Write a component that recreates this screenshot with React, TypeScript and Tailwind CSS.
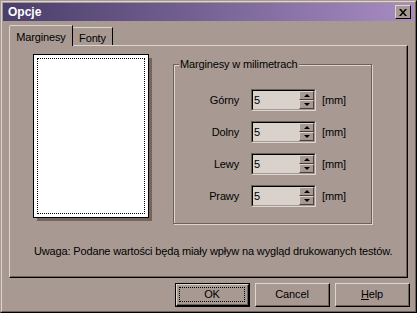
import React from 'react';

const font = { fontFamily: '"Liberation Sans", Arial, sans-serif' };

function Spin({ label }: { label: string }) {
  return (
    <div className="flex items-center h-[22px]">
      <span className="w-[68px] text-right pr-[12px]">{label}</span>
      <div className="w-[65px] h-[22px] border-t border-l border-[#6e605a] border-b border-r border-b-[#ddd5d0] border-r-[#ddd5d0] flex">
        <div className="flex-1 border-t border-l border-black border-b border-r border-b-[#a89a93] border-r-[#a89a93] bg-[#d9d1cc] flex">
          <span className="flex-1 pl-[1px] leading-[18px]">5</span>
          <div className="w-[15px] flex flex-col">
            <div className="flex-1 bg-[#a89a93] border-t border-l border-[#ddd5d0] border-b border-r border-b-[#4a3f3a] border-r-[#4a3f3a] flex items-center justify-center">
              <div className="w-0 h-0 border-l-[3px] border-r-[3px] border-b-[3px] border-l-transparent border-r-transparent border-b-black" />
            </div>
            <div className="flex-1 bg-[#a89a93] border-t border-l border-[#ddd5d0] border-b border-r border-b-[#4a3f3a] border-r-[#4a3f3a] flex items-center justify-center">
              <div className="w-0 h-0 border-l-[3px] border-r-[3px] border-t-[3px] border-l-transparent border-r-transparent border-t-black" />
            </div>
          </div>
        </div>
      </div>
      <span className="pl-[6px]">[mm]</span>
    </div>
  );
}

function Btn({ children, def }: { children: React.ReactNode; def?: boolean }) {
  return (
    <div className={`w-[75px] h-[24px] ${def ? 'border border-black' : ''}`}>
      <div className="w-full h-full border-t border-l border-[#ddd5d0] border-b border-r border-b-black border-r-black">
        <div className="w-full h-full border-b border-r border-[#6e605a] flex items-center justify-center p-[2px]">
          <div className={`w-full h-full flex items-center justify-center ${def ? 'border border-dotted border-black' : ''}`}>
            {children}
          </div>
        </div>
      </div>
    </div>
  );
}

export default function App() {
  return (
    <div style={font} className="w-[417px] h-[313px] bg-[#a89a93] text-[11px] tracking-[-0.15px] text-black border-t border-l border-[#a89a93] border-b border-r border-b-black border-r-black">
      <div className="w-full h-full border-t border-l border-[#ddd5d0] border-b border-r border-b-[#6e605a] border-r-[#6e605a] flex flex-col px-[1px]">
        {/* title bar */}
        <div className="h-[18px] mt-[1px] bg-gradient-to-r from-[#4a3e6a] to-[#a88cc2] flex items-center pl-[5px] pr-[3px]">
          <span className="text-white font-bold text-[12px] tracking-normal flex-1">Opcje</span>
          <div className="w-[16px] h-[14px] bg-[#a89a93] border-t border-l border-[#ddd5d0] border-b border-r border-b-black border-r-black flex items-center justify-center">
            <svg width="8" height="7" viewBox="0 0 8 7">
              <path d="M0 0h2l2 2.5L6 0h2L5 3.5 8 7H6L4 4.5 2 7H0l3-3.5z" fill="black" />
            </svg>
          </div>
        </div>

        {/* tabs */}
        <div className="flex items-end pl-[6px] mt-[3px] h-[21px]">
          <div className="h-[21px] w-[64px] border-t border-l border-[#ddd5d0] rounded-tl-[2px] border-r border-r-black flex items-start pt-[3px] justify-center relative z-10 bg-[#a89a93] -mb-[1px]">
            Marginesy
          </div>
          <div className="h-[18px] w-[40px] border-t border-[#ddd5d0] border-r border-r-black flex items-start pt-[2px] justify-center">
            Fonty
          </div>
        </div>

        {/* panel */}
        <div className="mx-[6px] h-[233px] border-t border-l border-[#ddd5d0] border-b border-r border-b-black border-r-black">
          <div className="w-full h-full border-b border-r border-[#6e605a] flex flex-col pl-[23px] pt-[8px]">
            <div className="flex">
              <div className="w-[119px] h-[167px] relative">
                <div className="absolute left-[4px] top-[4px] w-[115px] h-[163px] bg-[#75635e]" />
                <div className="absolute left-0 top-0 w-[116px] h-[164px] bg-white border border-black p-[3px]">
                  <div className="w-full h-full border border-dotted border-black" />
                </div>
              </div>
              <div className="ml-[21px] mt-[10px] w-[199px] h-[160px] relative border border-[#6e605a] shadow-[inset_1px_1px_0_#ddd5d0,1px_1px_0_#ddd5d0]">
                <span className="absolute -top-[8px] left-[5px] px-[1px] bg-[#a89a93] leading-[14px]">Marginesy w milimetrach</span>
                <div className="flex flex-col gap-[10px] pt-[24px] pl-[9px]">
                  <Spin label="Górny" />
                  <Spin label="Dolny" />
                  <Spin label="Lewy" />
                  <Spin label="Prawy" />
                </div>
              </div>
            </div>
            <div className="mt-[19px] pl-[1px]">Uwaga: Podane wartości będą miały wpływ na wygląd drukowanych testów.</div>
          </div>
        </div>

        {/* buttons */}
        <div className="flex justify-end gap-[5px] pr-[4px] mt-[5px]">
          <Btn def>OK</Btn>
          <Btn>Cancel</Btn>
          <Btn><span><span className="underline">H</span>elp</span></Btn>
        </div>
      </div>
    </div>
  );
}
